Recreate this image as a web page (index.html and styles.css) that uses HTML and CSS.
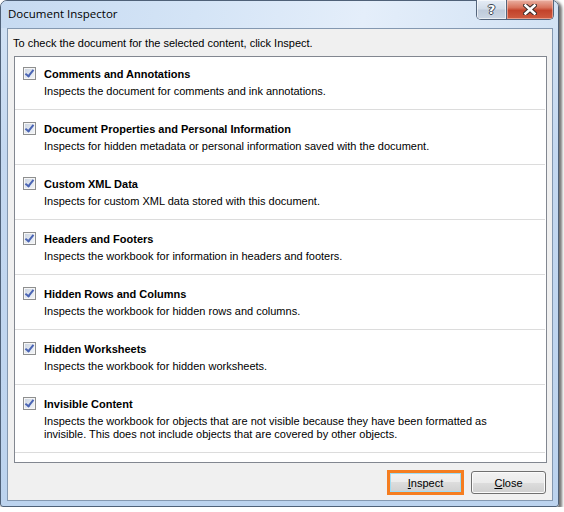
FILE: index.html
```html
<!DOCTYPE html>
<html>
<head>
    <title>Document Inspector</title>
    <meta name="viewport" content="width=device-width, initial-scale=1.0">
    <link rel="stylesheet" href="styles.css">
</head>
<body>
    <div class="window">
        <div class="titlebar">
            <span class="title">Document Inspector</span>
            <div class="caption">
                <span class="cap-btn help">?</span>
                <span class="cap-btn close">
                    <svg width="14" height="11" viewBox="0 0 14 11">
                        <path d="M2.5 1.5 L11.5 9.5 M11.5 1.5 L2.5 9.5" stroke="#3a2a28" stroke-width="4.6" stroke-linecap="square"/>
                        <path d="M2.5 1.5 L11.5 9.5 M11.5 1.5 L2.5 9.5" stroke="#fff" stroke-width="2.6" stroke-linecap="square"/>
                    </svg>
                </span>
            </div>
        </div>
        <div class="client">
            <p class="intro">To check the document for the selected content, click Inspect.</p>
            <div class="list">
                <div class="items">
                    <div class="item">
                        <span class="check"></span>
                        <div class="text">
                            <div class="name">Comments and Annotations</div>
                            <div class="desc">Inspects the document for comments and ink annotations.</div>
                        </div>
                    </div>
                    <div class="item">
                        <span class="check"></span>
                        <div class="text">
                            <div class="name">Document Properties and Personal Information</div>
                            <div class="desc">Inspects for hidden metadata or personal information saved with the document.</div>
                        </div>
                    </div>
                    <div class="item">
                        <span class="check"></span>
                        <div class="text">
                            <div class="name">Custom XML Data</div>
                            <div class="desc">Inspects for custom XML data stored with this document.</div>
                        </div>
                    </div>
                    <div class="item">
                        <span class="check"></span>
                        <div class="text">
                            <div class="name">Headers and Footers</div>
                            <div class="desc">Inspects the workbook for information in headers and footers.</div>
                        </div>
                    </div>
                    <div class="item">
                        <span class="check"></span>
                        <div class="text">
                            <div class="name">Hidden Rows and Columns</div>
                            <div class="desc">Inspects the workbook for hidden rows and columns.</div>
                        </div>
                    </div>
                    <div class="item">
                        <span class="check"></span>
                        <div class="text">
                            <div class="name">Hidden Worksheets</div>
                            <div class="desc">Inspects the workbook for hidden worksheets.</div>
                        </div>
                    </div>
                    <div class="item">
                        <span class="check"></span>
                        <div class="text">
                            <div class="name">Invisible Content</div>
                            <div class="desc">Inspects the workbook for objects that are not visible because they have been formatted as<br>invisible. This does not include objects that are covered by other objects.</div>
                        </div>
                    </div>
                </div>
            </div>
            <div class="actions">
                <button class="btn default"><u>I</u>nspect</button>
                <button class="btn"><u>C</u>lose</button>
            </div>
        </div>
    </div>
</body>
</html>
```

FILE: styles.css
```css
body {
    margin: 0;
    background-color: #fff;
    font-family: "Liberation Sans", Arial, sans-serif;
    font-size: 11px;
    color: #000;
}

/* window frame */
.window {
    width: 559px;
    height: 507px;
    box-sizing: border-box;
    border: 1px solid #4f6178;
    border-radius: 7px 7px 3px 3px;
    background: linear-gradient(to bottom, #d3e3f5 0%, #c4d8f0 30%, #bcd3ee 100%);
    box-shadow: 2px 2px 3px 1px rgba(0, 0, 0, 0.55);
    display: flex;
    flex-direction: column;
}

.titlebar {
    height: 27px;
    flex-shrink: 0;
    display: flex;
    justify-content: space-between;
    align-items: flex-start;
    border-radius: 6px 6px 0 0;
    background: linear-gradient(100deg, #c6daf1 0%, #d4e4f6 35%, #e4eefa 65%, #d2e2f4 100%);
}

.title {
    font-family: "Open Sans", "Noto Sans", sans-serif;
    font-size: 11.5px;
    line-height: 14px;
    padding: 6px 0 0 7px;
    color: #000;
}

.caption {
    display: flex;
    height: 19px;
    margin: -1px 4px 0 0;
    border: 1px solid #54657c;
    border-top: none;
    border-radius: 0 0 5px 5px;
    overflow: hidden;
}

.cap-btn {
    display: flex;
    align-items: center;
    justify-content: center;
}

.help {
    width: 29px;
    border-right: 1px solid #54657c;
    background: linear-gradient(to bottom, #e6edf6 0%, #d3dde9 45%, #bfcbdb 55%, #cbd6e4 100%);
    box-shadow: inset 0 0 0 1px rgba(255, 255, 255, 0.6);
    font-family: "DejaVu Sans", sans-serif;
    font-weight: bold;
    font-size: 13px;
    color: #fff;
    text-shadow: 1px 0 0 #3b4452, -1px 0 0 #3b4452, 0 1px 0 #3b4452, 0 -1px 0 #3b4452;
}

.close {
    width: 46px;
    background: linear-gradient(to bottom, #eab1a3 0%, #d8735c 40%, #c3432b 55%, #cf5c41 100%);
    box-shadow: inset 0 0 0 1px rgba(255, 220, 210, 0.5);
}

/* dialog client area */
.client {
    flex: 1;
    display: flex;
    flex-direction: column;
    margin: 0 5px 5px 6px;
    border: 1px solid #8498b0;
    background-color: #f0f0f0;
}

.intro {
    margin: 0;
    padding: 7px 0 0 5px;
    line-height: 14px;
}

.list {
    height: 407px;
    box-sizing: border-box;
    margin: 6px 5px 0 6px;
    border: 1px solid #828790;
    background-color: #fff;
    overflow: hidden;
}

.items {
    margin-top: -2px;
}

.item {
    display: flex;
    align-items: flex-start;
    padding: 12px 0 11px 8px;
    margin-right: 1px;
    border-bottom: 1px solid #dcdcdc;
}

.check {
    position: relative;
    width: 13px;
    height: 13px;
    box-sizing: border-box;
    flex-shrink: 0;
    margin-right: 8px;
    border: 1px solid #8e8f8f;
    background: linear-gradient(135deg, #c9d2df 0%, #e4e9f0 60%, #f4f6f8 100%);
    box-shadow: inset 0 0 0 1px #f6f6f6;
}

/* check mark */
.check::after {
    content: "";
    position: absolute;
    left: 3px;
    top: 0px;
    width: 3px;
    height: 7px;
    border: solid #4a64b4;
    border-width: 0 2px 2px 0;
    transform: rotate(38deg);
}

.name {
    font-weight: bold;
    line-height: 14px;
}

.desc {
    margin-top: 4px;
    line-height: 13px;
}

.actions {
    display: flex;
    justify-content: flex-end;
    align-items: center;
    gap: 7px;
    margin: 7px 6px 0 0;
}

.btn {
    width: 75px;
    height: 23px;
    padding: 0;
    border: 1px solid #707070;
    border-radius: 3px;
    background: linear-gradient(to bottom, #f2f2f2 0%, #ebebeb 50%, #dddddd 50%, #cfcfcf 100%);
    box-shadow: inset 0 0 0 1px #fbfbfb;
    font-family: "Liberation Sans", Arial, sans-serif;
    font-size: 11px;
    color: #000;
}

.btn.default {
    width: 77px;
    height: 25px;
    border: 3px solid #f57d20;
    border-radius: 0;
    box-shadow: inset 0 0 0 1px #9fdcf3;
}
```
